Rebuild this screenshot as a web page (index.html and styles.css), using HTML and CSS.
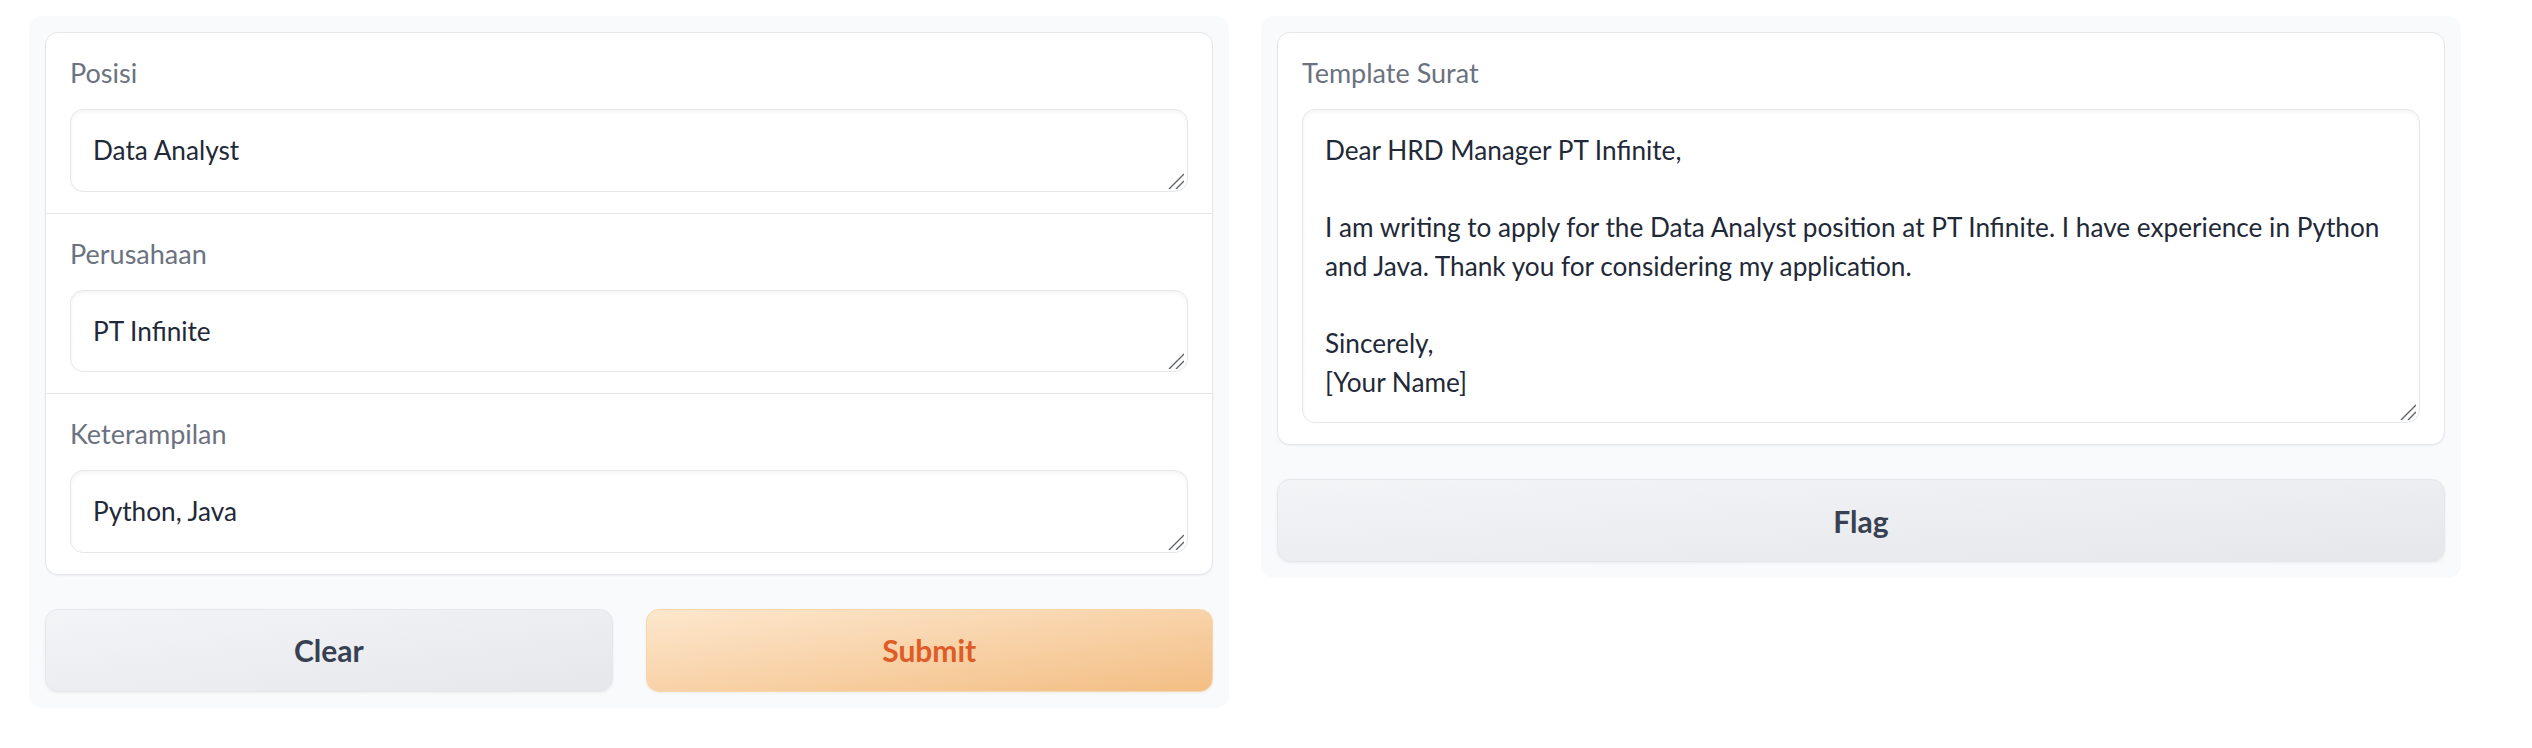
FILE: index.html
```html
<!DOCTYPE html>
<html lang="id">
<head>
<meta charset="utf-8">
<title>Template Surat</title>
<link rel="stylesheet" href="styles.css">
</head>
<body>
<div class="app">
  <div class="column">
    <div class="panel">
      <div class="card">
        <div class="field">
          <label class="label" for="posisi">Posisi</label>
          <div class="input-wrap">
            <textarea id="posisi" class="input" rows="1">Data Analyst</textarea>
            <svg class="grip" viewBox="0 0 16 16" aria-hidden="true"><path d="M1.5 15.5 L15.5 1.5 M8.5 15.5 L15.5 8.5"/></svg>
          </div>
        </div>
        <div class="field">
          <label class="label" for="perusahaan">Perusahaan</label>
          <div class="input-wrap">
            <textarea id="perusahaan" class="input" rows="1">PT Infinite</textarea>
            <svg class="grip" viewBox="0 0 16 16" aria-hidden="true"><path d="M1.5 15.5 L15.5 1.5 M8.5 15.5 L15.5 8.5"/></svg>
          </div>
        </div>
        <div class="field">
          <label class="label" for="keterampilan">Keterampilan</label>
          <div class="input-wrap">
            <textarea id="keterampilan" class="input" rows="1">Python, Java</textarea>
            <svg class="grip" viewBox="0 0 16 16" aria-hidden="true"><path d="M1.5 15.5 L15.5 1.5 M8.5 15.5 L15.5 8.5"/></svg>
          </div>
        </div>
      </div>
      <div class="button-row">
        <button class="btn btn-secondary">Clear</button>
        <button class="btn btn-primary">Submit</button>
      </div>
    </div>
  </div>
  <div class="column">
    <div class="panel">
      <div class="card">
        <div class="field">
          <label class="label" for="surat">Template Surat</label>
          <div class="input-wrap">
            <textarea id="surat" class="input" rows="7">Dear HRD Manager PT Infinite,

I am writing to apply for the Data Analyst position at PT Infinite. I have experience in Python and Java. Thank you for considering my application.

Sincerely,
[Your Name]</textarea>
            <svg class="grip" viewBox="0 0 16 16" aria-hidden="true"><path d="M1.5 15.5 L15.5 1.5 M8.5 15.5 L15.5 8.5"/></svg>
          </div>
        </div>
      </div>
      <div class="button-row">
        <button class="btn btn-secondary">Flag</button>
      </div>
    </div>
  </div>
</div>
</body>
</html>
```

FILE: styles.css
```css
* {
  box-sizing: border-box;
}

html, body {
  margin: 0;
  padding: 0;
  background: #ffffff;
}

body {
  font-family: Lato, "Liberation Sans", sans-serif;
  font-size: 26.2px;
  color: #1f2937;
}

.app {
  display: flex;
  align-items: flex-start;
  gap: 32px;
  padding: 16px 71px 0 29px;
}

.column {
  flex: 1 1 0;
  min-width: 0;
}

.panel {
  background: #f9fafb;
  border-radius: 13px;
  padding: 16px;
  display: flex;
  flex-direction: column;
  gap: 34px;
}

.card {
  background: #ffffff;
  border: 1px solid #e5e7eb;
  border-radius: 13px;
  box-shadow: 0 1px 2px rgba(0, 0, 0, 0.05);
  overflow: hidden;
}

.field {
  display: flex;
  flex-direction: column;
  padding: 20px 24px 21px;
}

.field + .field {
  border-top: 1px solid #e5e7eb;
}

.label {
  display: block;
  font-size: 27px;
  line-height: 39px;
  color: #6b7280;
  margin-bottom: 17px;
}

.input-wrap {
  position: relative;
}

.input {
  display: block;
  width: 100%;
  font-family: inherit;
  font-size: 26.2px;
  line-height: 38.6px;
  color: #1f2937;
  padding: 21px 22px;
  border: 1px solid #e5e7eb;
  border-radius: 13px;
  background: #ffffff;
  box-shadow: inset 0 2px 4px rgba(0, 0, 0, 0.05);
  resize: none;
  overflow: hidden;
  margin: 0;
  outline: none;
}

.grip {
  position: absolute;
  right: 4px;
  bottom: 3px;
  width: 16px;
  height: 16px;
  fill: none;
  stroke: #5f6368;
  stroke-width: 1.4;
  stroke-linecap: square;
  pointer-events: none;
}

.button-row {
  display: flex;
  gap: 33px;
}

.btn {
  flex: 1 1 0;
  height: 83px;
  border-radius: 13px;
  font-family: inherit;
  font-size: 30px;
  font-weight: 700;
  cursor: pointer;
  box-shadow: 0 1px 3px rgba(0, 0, 0, 0.06);
}

.btn-secondary {
  background: linear-gradient(to bottom right, #f3f4f6, #e5e7eb);
  border: 1px solid #e5e7eb;
  color: #374151;
}

.btn-primary {
  background: linear-gradient(to bottom right, #fde7cd, #f3be84);
  border: 1px solid #f9d6a8;
  color: #de5c27;
}
```
